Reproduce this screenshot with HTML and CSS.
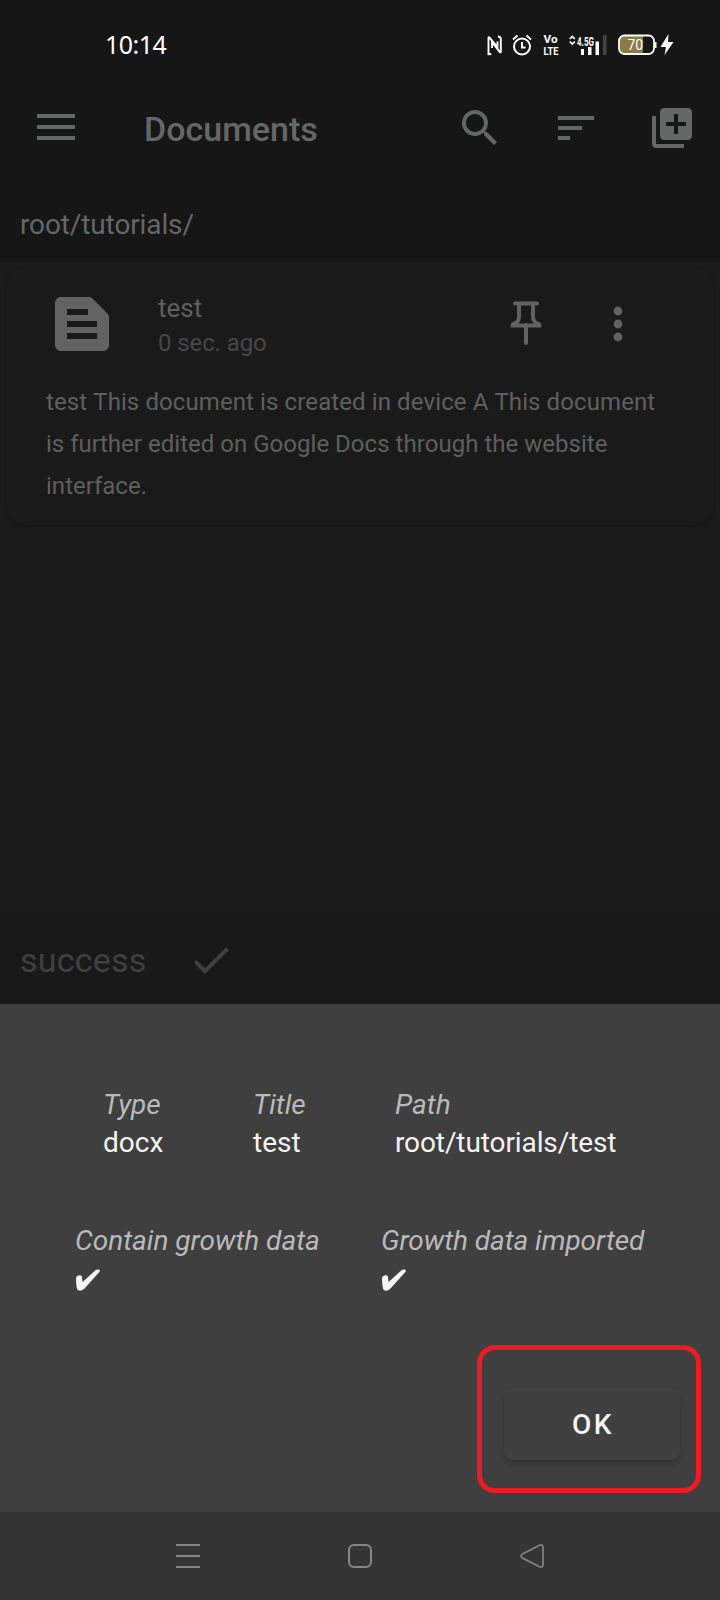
FILE: index.html
```html
<!DOCTYPE html>
<html lang="en">
<head>
<meta charset="utf-8">
<title>Documents</title>
<link rel="stylesheet" href="styles.css">
</head>
<body>
<div class="screen">
  <header class="top">
    <div class="status">
      <span class="clock">10:14</span>
      <div class="status-icons">
        <svg class="nfc" width="16" height="22" viewBox="0 0 16 22" fill="none" stroke="#fff" stroke-width="1.900"><path d="M4.300 20L1.500 20.300V4Q1.500 2.600 2.500 3.600L10.500 13V7.500M5 14V8L12.800 18Q13.800 19 13.800 17.500V4.500Q13.500 2.800 11 2.500"/></svg>
        <svg class="alarm" width="20" height="22" viewBox="0 0 20 22" fill="none" stroke="#fff" stroke-width="2"><circle cx="10" cy="12.500" r="8"/><path d="M10 8v5.500h3.500M1 5.500L5.500 1.500M19 5.500L14.500 1.500"/></svg>
        <svg class="volte" width="16" height="22" viewBox="0 0 16 22"><text x="0.500" y="9" textLength="14" lengthAdjust="spacingAndGlyphs">Vo</text><text x="0.500" y="20.500" textLength="15" lengthAdjust="spacingAndGlyphs">LTE</text></svg>
        <svg class="signal" width="38" height="22" viewBox="0 0 38 22">
          <path d="M.8 5L3.300 2.500 5.800 5M.8 7.500L3.300 10 5.800 7.500" fill="none" stroke="#fff" stroke-width="1.700"/>
          <text class="net" x="8" y="12" textLength="17" lengthAdjust="spacingAndGlyphs">4.5G</text>
          <path fill="#fff" d="M12 15h3v6h-3zM19 13h3.500v8H19zM26.500 7.500H30V21h-3.500z"/><rect x="34" y="1" width="3.500" height="20" rx="1" fill="#444"/>
        </svg>
        <svg class="battery" width="39" height="22" viewBox="0 0 39 22">
          <path fill="#8c7b46" d="M6 2h19v18H6a4 4 0 0 1-4-4V6a4 4 0 0 1 4-4z"/>
          <rect x="1" y="1.500" width="35" height="18.500" rx="5.500" fill="none" stroke="#fff" stroke-width="1.800"/>
          <rect x="36.500" y="8" width="2" height="6" fill="#fff"/>
          <text class="level" x="9.500" y="16" textLength="15.500">70</text>
        </svg>
        <svg class="bolt" width="14" height="22" viewBox="0 0 14 22"><path fill="#fff" d="M8.500 0L.5 13H6L4.500 21 13.500 8H8z"/></svg>
      </div>
    </div>
    <div class="appbar">
      <svg class="menu" width="38" height="26" viewBox="0 0 38 26"><path d="M0 0h38v4H0zM0 11h38v4H0zM0 22h38v4H0z"/></svg>
      <h1 class="title">Documents</h1>
      <svg class="action" viewBox="0 0 24 24"><path d="M15.500 14h-.79l-.28-.27A6.471 6.471 0 0 0 16 9.500 6.500 6.500 0 1 0 9.500 16c1.610 0 3.090-.59 4.230-1.570l.27.28v.79l5 4.990L20.490 19l-4.990-5zm-6 0C7.010 14 5 11.990 5 9.500S7.010 5 9.500 5 14 7.010 14 9.500 11.990 14 9.500 14z"/></svg>
      <svg class="action" viewBox="0 0 24 24"><path d="M3 18h6v-2H3v2zM3 6v2h18V6H3zm0 7h12v-2H3v2z"/></svg>
      <svg class="action" viewBox="0 0 24 24"><path d="M4 6H2v14c0 1.100.9 2 2 2h14v-2H4V6zm16-4H8c-1.100 0-2 .9-2 2v12c0 1.100.9 2 2 2h12c1.100 0 2-.9 2-2V4c0-1.100-.9-2-2-2zm-1 9h-4v4h-2v-4H9V9h4V5h2v4h4v2z"/></svg>
    </div>
    <div class="path">root/tutorials/</div>
  </header>
  <main class="list">
    <article class="card">
      <div class="card-head">
        <svg class="file" viewBox="0 0 24 24"><path d="M20.410 8.410l-4.830-4.830c-.37-.37-.88-.58-1.410-.58H5c-1.100 0-2 .9-2 2v14c0 1.100.9 2 2 2h14c1.100 0 2-.9 2-2V9.830c0-.53-.21-1.040-.59-1.420zM7 7h7v2H7V7zm10 10H7v-2h10v2zm0-4H7v-2h10v2z"/></svg>
        <div class="meta"><div class="name">test</div><div class="age">0 sec. ago</div></div>
        <svg class="pin" width="32" height="44" viewBox="0 0 32 44" fill="none" stroke="#626262" stroke-width="4"><path stroke-linecap="round" d="M5 2.500h22M16 24v18"/><path d="M9 3v13c0 4-3 6.500-7 7.500M23 3v13c0 4 3 6.500 7 7.500M.7 24.500h30.600"/></svg>
        <svg class="more" width="10" height="36" viewBox="0 0 10 36"><circle cx="5" cy="5" r="4.400"/><circle cx="5" cy="18" r="4.400"/><circle cx="5" cy="31" r="4.400"/></svg>
      </div>
      <p class="excerpt"><span class="lead">test This document is created in device A This document</span><br>is further edited on Google Docs through the website<br>interface.</p>
    </article>
  </main>
  <div class="result">
    <span>success</span>
    <svg class="check" viewBox="0 0 24 24"><path d="M9 16.170L4.830 12l-1.420 1.410L9 19 21 7l-1.410-1.410z"/></svg>
  </div>
  <section class="sheet">
    <dl class="row row-info">
      <div class="type"><dt>Type</dt><dd>docx</dd></div>
      <div class="doc-title"><dt>Title</dt><dd>test</dd></div>
      <div class="doc-path"><dt>Path</dt><dd>root/tutorials/test</dd></div>
    </dl>
    <dl class="row row-growth">
      <div class="contain"><dt>Contain growth data</dt><dd><svg class="tick" width="26" height="22" viewBox="0 0 26 22"><path d="M1 9.500C1 6.500 6.500 5 7 8l.6 5L20.500 1.200C22 0 25.200.2 24.800 2.200c-.2.800-.8 1.300-1.400 1.900L10 19c-2 2.200-4.500 3.200-6.800 2.300C1.500 20.600 1 13 1 9.500z"/></svg></dd></div>
      <div class="imported"><dt>Growth data imported</dt><dd><svg class="tick" width="26" height="22" viewBox="0 0 26 22"><path d="M1 9.500C1 6.500 6.500 5 7 8l.6 5L20.500 1.200C22 0 25.200.2 24.800 2.200c-.2.800-.8 1.300-1.400 1.900L10 19c-2 2.200-4.500 3.200-6.800 2.300C1.500 20.600 1 13 1 9.500z"/></svg></dd></div>
    </dl>
    <div class="highlight"><button class="ok">OK</button></div>
  </section>
  <nav class="nav">
    <svg viewBox="0 0 24 24"><path d="M0 1h24M0 12h24M0 23h24"/></svg>
    <svg viewBox="0 0 24 24"><rect x="1" y="1" width="22" height="22" rx="5"/></svg>
    <svg viewBox="0 0 24 24"><path stroke-width="1.700" d="M2 10.300L19.500 1.200Q23 0 23 3.500v17Q23 24 19.500 22.800L2 13.700Q.2 12 2 10.300z"/></svg>
  </nav>
</div>
</body>
</html>
```
FILE: styles.css
```css
* { box-sizing: border-box; margin: 0; padding: 0; }
body { background: #1a1a1a; font-family: Roboto, "Liberation Sans", sans-serif; }
svg { display: block; flex: none; overflow: visible; }
.screen { width: 720px; height: 1600px; display: flex; flex-direction: column; background: #1a1a1a; white-space: nowrap; overflow: hidden; }

.top { height: 262px; background: #161616; color: #636867; flex: none; }
.status { height: 90px; padding: 0 46px 0 105px; display: flex; justify-content: space-between; align-items: center; }
.clock { font: 25px/30px "Noto Sans", sans-serif; letter-spacing: -.5px; margin-top: -2px; color: #fff; }
.status-icons { display: flex; align-items: center; color: #fff; }
.alarm { margin-left: 9px; }
.volte { margin-left: 11px; font: bold 11.500px Roboto, sans-serif; fill: #fff; }
.signal { margin-left: 10px; }
.net { font: bold 12px Roboto, sans-serif; fill: #fff; }
.battery { margin-left: 11px; }
.level { font: 14px Roboto, sans-serif; fill: #fff; }
.bolt { margin-left: 3px; }

.appbar { height: 76px; padding: 0 24px 0 37px; display: flex; align-items: center; fill: #636867; }
.menu { margin-top: -2px; }
.title { width: 312px; margin-left: 69px; margin-top: 1px; font-size: 34px; line-height: 40px; font-weight: 500; }
.action { width: 48px; height: 48px; }
.action + .action { margin-left: 48px; }
.path { margin-top: 39px; padding-left: 20px; font-size: 28px; line-height: 40px; letter-spacing: -.12px; }

.list { flex: 1; padding: 5px 6px; }
.card { height: 258px; border-radius: 20px; padding-left: 40px; background: #1a1a1a; box-shadow: 0 1px 3px #161616; }
.card-head { height: 120px; padding-top: 21px; display: flex; }
.file { width: 72px; height: 72px; fill: #636363; }
.meta { margin-left: 40px; width: 352px; }
.name { color: #5f5f5f; font-size: 26px; line-height: 36px; margin-top: 2px; }
.age { color: #474747; font-size: 24px; line-height: 34px; letter-spacing: -.1px; }
.pin { margin-top: 13px; }
.more { margin: 18px 0 0 71px; fill: #636363; }
.excerpt { color: #5f5f5f; font-size: 24px; line-height: 42px; margin-top: -6px; font-kerning: none; letter-spacing: .02px; }
.lead { letter-spacing: .09px; }

.result { height: 94px; padding-left: 20px; display: flex; align-items: center; background: #191919; color: #404040; font-size: 34px; letter-spacing: .2px; }
.result span { width: 167px; margin-top: 6px; }
.check { width: 48px; height: 48px; fill: #404040; margin-top: 5px; }

.sheet { height: 508px; flex: none; background: #3f3f3f; font-size: 28px; line-height: 38px; padding-top: 82px; }
.row { display: flex; }
.row-info { height: 136px; padding-left: 103px; }
.type { width: 150px; }
.doc-title { width: 142px; }
dt { font-style: italic; color: #bababa; }
dd { color: #f4f4f4; }
.doc-path dd { letter-spacing: -.1px; }
.row-growth { height: 123px; padding-left: 75px; }
.contain { width: 306px; }
.tick { fill: #f4f4f4; margin-top: 9px; }
.imported dt { letter-spacing: -.05px; }
.highlight { width: 224px; height: 148px; margin-left: 477px; border: 5px solid #ed1c24; border-radius: 18px; padding: 38px 0 0 22px; }
.ok { display: block; width: 176px; height: 72px; border: 0; border-radius: 8px; background: #404040; color: #f4f4f4; font: 500 28px/70px Roboto, sans-serif; letter-spacing: 2.500px; padding: 2px 0 0 2px; box-shadow: 0 4px 6px rgba(0,0,0,.2), 0 2px 2px rgba(0,0,0,.05); }

.nav { height: 88px; flex: none; padding: 0 176px; display: flex; justify-content: space-between; align-items: center; background: #353535; }
.nav svg { width: 24px; height: 24px; fill: none; stroke: #858585; stroke-width: 2; }
```
